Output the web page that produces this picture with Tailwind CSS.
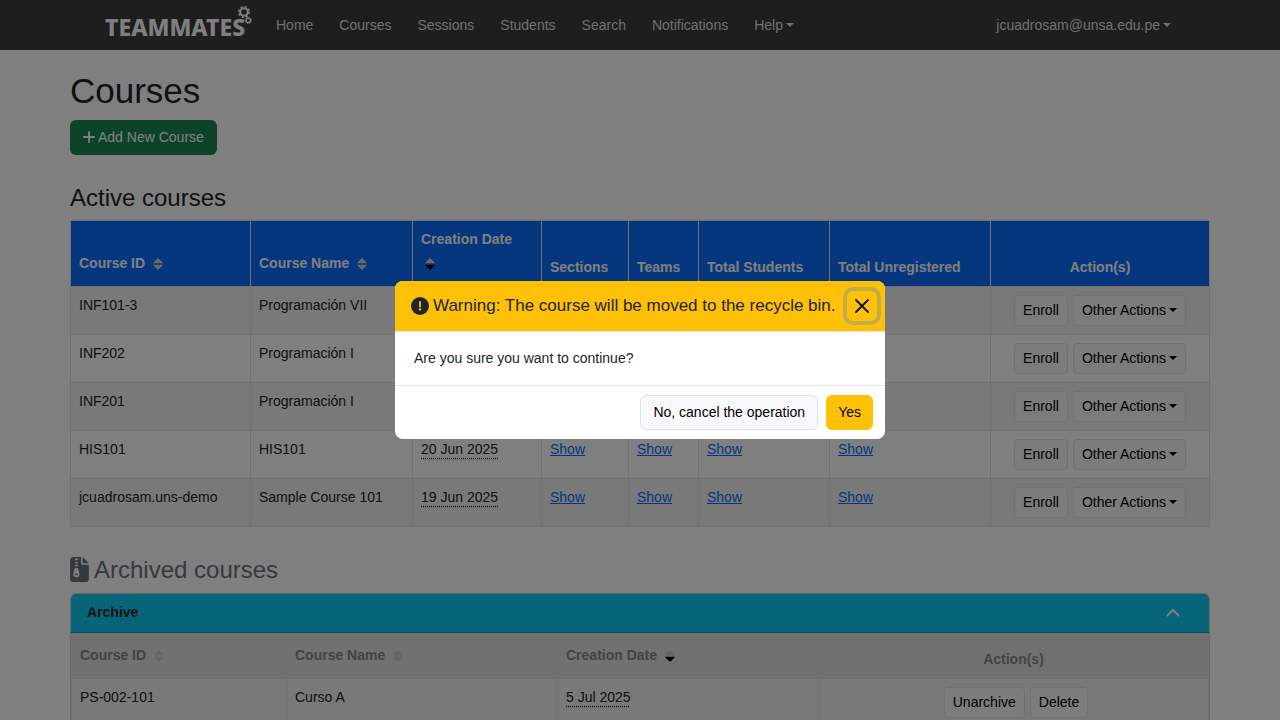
<!DOCTYPE html>
<html lang="en">
<head>
<meta charset="utf-8">
<meta name="viewport" content="width=device-width, initial-scale=1">
<title>Courses - TEAMMATES</title>
<script src="https://cdn.jsdelivr.net/npm/@tailwindcss/browser@4"></script>
</head>
<body class="h-screen overflow-hidden bg-white font-['Liberation_Sans',Arial,sans-serif] text-[14px] leading-[21px] text-[#212529]">

<svg class="hidden" aria-hidden="true">
  <symbol id="sort-up" viewBox="0 0 10 12"><path d="M5 0 L9.6 4.6 Q9.8 5.2 9.2 5.2 H.8 Q.2 5.2 .4 4.6 Z"/></symbol>
  <symbol id="sort-down" viewBox="0 0 10 12"><path d="M5 12 L9.6 7.4 Q9.8 6.8 9.2 6.8 H.8 Q.2 6.8 .4 7.4 Z"/></symbol>
  <symbol id="caret" viewBox="0 0 8 4"><path d="M0 0H8L4 4Z"/></symbol>
</svg>

<nav class="bg-[#3c3c3c] text-[#dedede]">
  <div class="mx-auto flex h-[50px] w-full max-w-[1140px] items-center pl-[35px] pr-[39px]">
    <a href="#" class="relative mr-6 block w-[147px] pt-1 font-['Noto_Sans','Open_Sans',sans-serif] text-[23px] leading-[36px] font-extrabold text-white">TEAMMATES
      <svg class="absolute top-0 right-0 h-[20px] w-[16px]" viewBox="0 0 16 20" fill="none" stroke="currentColor" aria-hidden="true">
        <circle cx="8" cy="7" r="3.8" stroke-width="2"/>
        <circle cx="8" cy="7" r="5.3" stroke-width="1.6" stroke-dasharray="2.1 2.06"/>
        <circle cx="12.3" cy="15.3" r="2.2" stroke-width="1.3"/>
        <circle cx="12.3" cy="15.3" r="3.2" stroke-width="1" stroke-dasharray="1.25 1.26"/>
      </svg>
    </a>
    <div class="flex gap-[26px]">
      <a href="#">Home</a>
      <a href="#">Courses</a>
      <a href="#">Sessions</a>
      <a href="#">Students</a>
      <a href="#">Search</a>
      <a href="#">Notifications</a>
      <button type="button" class="flex items-center gap-[3px]">Help<svg class="mb-px h-1 w-2 fill-current"><use href="#caret"/></svg></button>
    </div>
    <button type="button" class="ml-auto flex items-center gap-[3px]">jcuadrosam@unsa.edu.pe<svg class="mb-px h-1 w-2 fill-current"><use href="#caret"/></svg></button>
  </div>
</nav>

<main class="mx-auto w-full max-w-[1140px] pt-5">
  <h1 class="mb-2 text-[35px] leading-[42px]">Courses</h1>
  <button type="button" class="flex h-[35px] items-center gap-[3px] rounded-md bg-[#198754] px-[13px] text-white">
    <svg class="mb-px h-3 w-3" viewBox="0 0 12 12" stroke="currentColor" stroke-width="1.8" stroke-linecap="round" aria-hidden="true"><path d="M6 .9V11.1M.9 6H11.1"/></svg>Add New Course
  </button>

  <h2 class="mt-7 mb-2 text-[24px] leading-[29px]">Active courses</h2>
  <table class="w-full table-fixed border-collapse text-left [&_td]:border [&_td]:border-[#dee2e6] [&_td]:p-2 [&_td]:align-top [&_th]:border [&_th]:border-[#dee2e6] [&_th]:p-2 [&_th]:align-bottom">
    <colgroup><col class="w-[180px]"><col class="w-[162px]"><col class="w-[129px]"><col class="w-[87px]"><col class="w-[70px]"><col class="w-[131px]"><col class="w-[161px]"><col></colgroup>
    <thead class="bg-[#0d6efd] text-white">
      <tr>
        <th><button type="button" class="flex h-7 items-center gap-2 pb-px font-bold">Course ID<svg class="h-3 w-[10px] fill-[#d3d3d3]"><use href="#sort-up"/><use href="#sort-down"/></svg></button></th>
        <th><button type="button" class="flex h-7 items-center gap-2 pb-px font-bold">Course Name<svg class="h-3 w-[10px] fill-[#d3d3d3]"><use href="#sort-up"/><use href="#sort-down"/></svg></button></th>
        <th><button type="button" class="block text-left font-bold">Creation Date<span class="flex h-7 items-center pb-px pl-1"><svg class="h-3 w-[10px]"><use href="#sort-up" class="fill-[#d3d3d3]"/><use href="#sort-down" class="fill-black"/></svg></span></button></th>
        <th>Sections</th>
        <th>Teams</th>
        <th>Total Students</th>
        <th class="whitespace-nowrap">Total Unregistered</th>
        <th class="text-center">Action(s)</th>
      </tr>
    </thead>
    <tbody class="[&_a]:text-[#0d6efd] [&_a]:underline [&_tr:nth-child(odd)]:bg-[#f2f2f2] [&_td_button]:flex [&_td_button]:h-[31px] [&_td_button]:items-center [&_td_button]:gap-[3px] [&_td_button]:rounded [&_td_button]:border [&_td_button]:border-[#dee2e6] [&_td_button]:bg-[#f8f9fa] [&_td_button]:px-2 [&_td_button]:text-black">
      <tr>
        <td>INF101-3</td><td>Programación VII</td><td></td><td></td><td></td><td></td><td></td>
        <td><div class="flex justify-center gap-[5px]"><button type="button">Enroll</button><button type="button">Other Actions<svg class="mb-px h-1 w-2"><use href="#caret"/></svg></button></div></td>
      </tr>
      <tr>
        <td>INF202</td><td>Programación I</td><td></td><td></td><td></td><td></td><td></td>
        <td><div class="flex justify-center gap-[5px]"><button type="button">Enroll</button><button type="button">Other Actions<svg class="mb-px h-1 w-2"><use href="#caret"/></svg></button></div></td>
      </tr>
      <tr>
        <td>INF201</td><td>Programación I</td><td></td><td></td><td></td><td></td><td></td>
        <td><div class="flex justify-center gap-[5px]"><button type="button">Enroll</button><button type="button">Other Actions<svg class="mb-px h-1 w-2"><use href="#caret"/></svg></button></div></td>
      </tr>
      <tr>
        <td>HIS101</td><td>HIS101</td><td><span class="underline decoration-dotted underline-offset-4">20 Jun 2025</span></td><td><a href="#">Show</a></td><td><a href="#">Show</a></td><td><a href="#">Show</a></td><td><a href="#">Show</a></td>
        <td><div class="flex justify-center gap-[5px]"><button type="button">Enroll</button><button type="button">Other Actions<svg class="mb-px h-1 w-2"><use href="#caret"/></svg></button></div></td>
      </tr>
      <tr>
        <td>jcuadrosam.uns-demo</td><td>Sample Course 101</td><td><span class="underline decoration-dotted underline-offset-4">19 Jun 2025</span></td><td><a href="#">Show</a></td><td><a href="#">Show</a></td><td><a href="#">Show</a></td><td><a href="#">Show</a></td>
        <td><div class="flex justify-center gap-[5px]"><button type="button">Enroll</button><button type="button">Other Actions<svg class="mb-px h-1 w-2"><use href="#caret"/></svg></button></div></td>
      </tr>
    </tbody>
  </table>

  <h2 class="mt-7 mb-[9px] flex items-center gap-[5px] text-[24px] leading-[29px] text-[#6c757d]">
    <svg class="mb-px h-[25px] w-[19px]" viewBox="0 0 384 512" fill="currentColor" aria-hidden="true"><path fill-rule="evenodd" d="M64 0C28.700 0 0 28.700 0 64V448c0 35.300 28.700 64 64 64H320c35.300 0 64-28.700 64-64V160H256c-17.700 0-32-14.300-32-32V0H64ZM256 0V128H384L256 0ZM96 48c0-8.800 7.200-16 16-16h32c8.800 0 16 7.200 16 16s-7.200 16-16 16H112c-8.800 0-16-7.200-16-16Zm0 64c0-8.800 7.200-16 16-16h32c8.800 0 16 7.200 16 16s-7.200 16-16 16H112c-8.800 0-16-7.200-16-16Zm0 64c0-8.800 7.200-16 16-16h32c8.800 0 16 7.200 16 16s-7.200 16-16 16H112c-8.800 0-16-7.200-16-16Zm-6.300 71.800c3.700-14 16.400-23.800 30.900-23.800h14.800c14.500 0 27.200 9.700 30.900 23.800l23.500 88.200c1.400 5.400 2.100 10.900 2.100 16.400 0 35.200-28.800 63.700-64 63.700s-64-28.500-64-63.700c0-5.500.7-11.100 2.100-16.400l23.700-88.200ZM112 336c-8.800 0-16 7.200-16 16s7.200 16 16 16h32c8.800 0 16-7.200 16-16s-7.200-16-16-16H112Z"/></svg>Archived courses
  </h2>
  <section class="overflow-hidden rounded-md border border-[#d2d2d2]">
    <button type="button" class="flex h-[39px] w-full items-center justify-between border-b border-[#0aa4c3] bg-[#0dcaf0] pr-[29px] pb-px pl-4 font-bold">Archive
      <svg class="h-[9px] w-[14px] text-white" viewBox="0 0 14 9" fill="none" stroke="currentColor" stroke-width="2" stroke-linecap="round" stroke-linejoin="round" aria-hidden="true"><path d="M1.500 7.500 7 2l5.500 5.500"/></svg>
    </button>
    <table class="w-full table-fixed border-collapse text-left [&_td]:border [&_td]:border-[#dee2e6] [&_td]:p-2 [&_td]:align-top [&_th]:border [&_th]:border-[#dedede] [&_th]:p-2 [&_th]:align-bottom">
      <colgroup><col class="w-[215px]"><col class="w-[271px]"><col class="w-[261px]"><col></colgroup>
      <thead class="bg-[#e2e2e2] text-[#888888]">
        <tr>
          <th><button type="button" class="flex h-7 items-center gap-2 pb-px font-bold">Course ID<svg class="h-3 w-[10px] fill-[#cacaca]"><use href="#sort-up"/><use href="#sort-down"/></svg></button></th>
          <th><button type="button" class="flex h-7 items-center gap-2 pb-px font-bold">Course Name<svg class="h-3 w-[10px] fill-[#cacaca]"><use href="#sort-up"/><use href="#sort-down"/></svg></button></th>
          <th><button type="button" class="flex h-7 items-center gap-2 pb-px font-bold">Creation Date<svg class="h-3 w-[10px]"><use href="#sort-up" class="fill-[#cacaca]"/><use href="#sort-down" class="fill-black"/></svg></button></th>
          <th class="text-center">Action(s)</th>
        </tr>
      </thead>
      <tbody class="bg-[#f2f2f2] [&_td_button]:h-[31px] [&_td_button]:rounded [&_td_button]:border [&_td_button]:border-[#dee2e6] [&_td_button]:bg-[#f8f9fa] [&_td_button]:px-2 [&_td_button]:text-black">
        <tr>
          <td>PS-002-101</td><td>Curso A</td><td><span class="underline decoration-dotted underline-offset-4">5 Jul 2025</span></td>
          <td><div class="flex justify-center gap-[5px] pl-[5px]"><button type="button">Unarchive</button><button type="button">Delete</button></div></td>
        </tr>
      </tbody>
    </table>
  </section>
</main>

<div class="fixed inset-0 flex items-center justify-center bg-black/50">
  <div role="dialog" aria-modal="true" aria-labelledby="dialog-title" class="w-full max-w-[490px] overflow-hidden rounded-lg bg-white">
    <header class="flex h-[51px] items-center justify-between border-b border-[#dee2e6] bg-[#ffc107] pr-2 pl-4">
      <h5 id="dialog-title" class="flex items-center gap-1 text-[17px] leading-[26px] whitespace-nowrap">
        <svg class="mb-px h-[18px] w-[18px]" viewBox="0 0 18 18" aria-hidden="true"><circle cx="9" cy="9" r="9" fill="#212529"/><path d="M9 5V9.500" stroke="#ffc107" stroke-width="1.800" stroke-linecap="round"/><circle cx="9" cy="12.500" r="1.150" fill="#ffc107"/></svg>Warning: The course will be moved to the recycle bin.
      </h5>
      <button type="button" aria-label="Close" class="flex h-[30px] w-[30px] shrink-0 items-center justify-center rounded-md ring-4 ring-[#c1ac45]">
        <svg class="h-[14px] w-[14px]" viewBox="0 0 14 14" stroke="#131005" stroke-width="1.900" stroke-linecap="round" aria-hidden="true"><path d="M1 1 13 13M13 1 1 13"/></svg>
      </button>
    </header>
    <p class="px-[19px] py-4">Are you sure you want to continue?</p>
    <footer class="flex justify-end gap-2 border-t border-[#dee2e6] px-3 py-[9px] text-black">
      <button type="button" class="h-[35px] rounded-md border border-[#dee2e6] bg-[#f8f9fa] px-3">No, cancel the operation</button>
      <button type="button" class="h-[35px] rounded-md border border-[#ffc107] bg-[#ffc107] px-[11px]">Yes</button>
    </footer>
  </div>
</div>
</body>
</html>
